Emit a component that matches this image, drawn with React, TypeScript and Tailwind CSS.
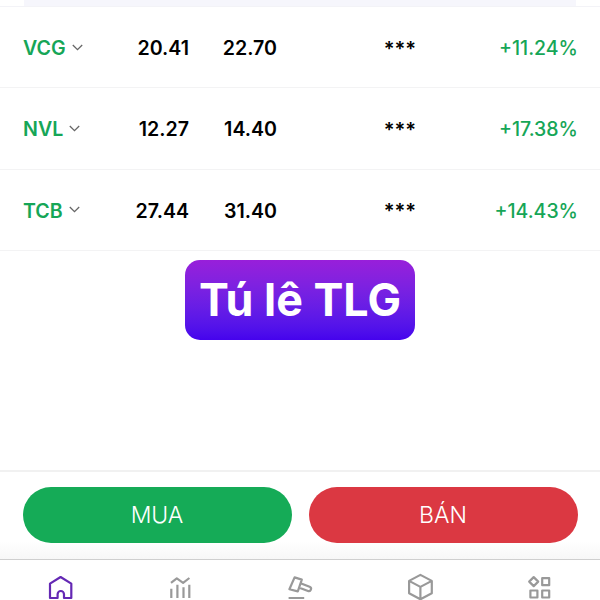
import React from "react";

interface Holding {
  symbol: string;
  cost: string;
  price: string;
  change: string;
}

const holdings: Holding[] = [
  { symbol: "VCG", cost: "20.41", price: "22.70", change: "+11.24%" },
  { symbol: "NVL", cost: "12.27", price: "14.40", change: "+17.38%" },
  { symbol: "TCB", cost: "27.44", price: "31.40", change: "+14.43%" },
];

const navigation = [
  {
    name: "home",
    color: "text-[#6428b4]",
    icon: (
      <path d="M5 26V11.6L15.6 5l10.7 6.6V26H19v-3.8a3.2 3.2 0 0 0-6.4 0V26z" />
    ),
  },
  {
    name: "market",
    color: "text-[#999999]",
    icon: (
      <path d="M6 10.8l5.8-4.4 6.3 4.4 6.3-4.8M6.3 16.7V26M12.4 12.7V26M18.5 15.3V26M24.3 12.7V26" />
    ),
  },
  {
    name: "auction",
    color: "text-[#999999]",
    icon: (
      <path d="M9.6 5.4l7.2 2.2-4 11.8-8.4-2.2zM16.2 11.4l8.4 3.4a2.2 2.2 0 0 1-1.6 4.2l-8.6-3.2M3.6 26h15.6" />
    ),
  },
  {
    name: "assets",
    color: "text-[#999999]",
    icon: (
      <path d="M15.4 2.9l11.4 6v12.4l-11.4 6-11.3-6V8.9zM4.1 8.9l11.3 6 11.4-6M15.4 14.9v12.4" />
    ),
  },
  {
    name: "more",
    color: "text-[#999999]",
    icon: (
      <path d="M8.7 5.1l4.5 4.5-4.5 4.5-4.5-4.5zM17.2 6.2h7v7h-7zM5.4 18.5h7v7h-7zM17.2 18.5h7v7h-7z" />
    ),
  },
];

const HoldingRow: React.FC<{ holding: Holding }> = ({ holding }) => (
  <div className="grid h-full grid-cols-[99px_67px_88px_139px_1fr] items-center border-b border-[#f3f3f4] pt-[3px] pr-[22px] pl-[23px] text-[19.6px] font-semibold text-black">
    <div className="flex items-center gap-[6px] text-[#16a657]">
      <span>{holding.symbol}</span>
      <svg
        className="-mt-[3px] h-[7px] w-[11px] text-[#666666]"
        viewBox="0 0 11 7"
        fill="none"
        stroke="currentColor"
        strokeWidth="1.3"
      >
        <path d="M.8 1l4.7 4.7L10.2 1" />
      </svg>
    </div>
    <span className="text-right">{holding.cost}</span>
    <span className="text-right">{holding.price}</span>
    <span className="text-right text-[20px]">***</span>
    <span className="text-right text-[19.5px] font-medium text-[#16a657]">
      {holding.change}
    </span>
  </div>
);

const App: React.FC = () => {
  return (
    <div className="flex h-[600px] w-[600px] flex-col overflow-hidden bg-white font-['Inter',sans-serif]">
      {/* Bottom edge of the summary card */}
      <div className="h-[7px] shrink-0 border-b border-[#f3f3f7] px-[24px]">
        <div className="h-[6px] bg-[#f6f6fc]" />
      </div>

      {/* Holdings */}
      <div className="grid h-[244px] shrink-0 grid-rows-3">
        {holdings.map((holding) => (
          <HoldingRow key={holding.symbol} holding={holding} />
        ))}
      </div>

      {/* Group label */}
      <div className="flex flex-1 items-start justify-center pt-[9px]">
        <div className="flex h-[80px] w-[230px] items-center justify-center rounded-[15px] bg-linear-to-b from-[#981fda] to-[#4502ed] pt-[2px] text-[44.8px] font-bold whitespace-nowrap text-white">
          Tú lê TLG
        </div>
      </div>

      {/* Order buttons */}
      <div className="flex h-[89px] shrink-0 gap-[17px] border-t-2 border-[#f1f1f1] bg-linear-to-b from-white from-80% to-[#f7f7f7] px-[22.5px] pt-[15px]">
        <button className="h-[56px] flex-1 rounded-full bg-[#15ab57] pt-[1px] text-[23px] font-[350] text-white">
          MUA
        </button>
        <button className="h-[56px] flex-1 rounded-full bg-[#db3842] pt-[1px] text-[23px] font-[350] text-white">
          BÁN
        </button>
      </div>

      {/* Bottom navigation */}
      <nav className="grid h-[41px] shrink-0 grid-cols-5 items-end justify-items-center border-t border-[#cfcfcf]">
        {navigation.map((item) => (
          <svg
            key={item.name}
            className={`h-[28px] w-[30px] ${item.color}`}
            viewBox="0 0 30 28"
            fill="none"
            stroke="currentColor"
            strokeWidth="2.2"
            strokeLinejoin="round"
          >
            {item.icon}
          </svg>
        ))}
      </nav>
    </div>
  );
};

export default App;
